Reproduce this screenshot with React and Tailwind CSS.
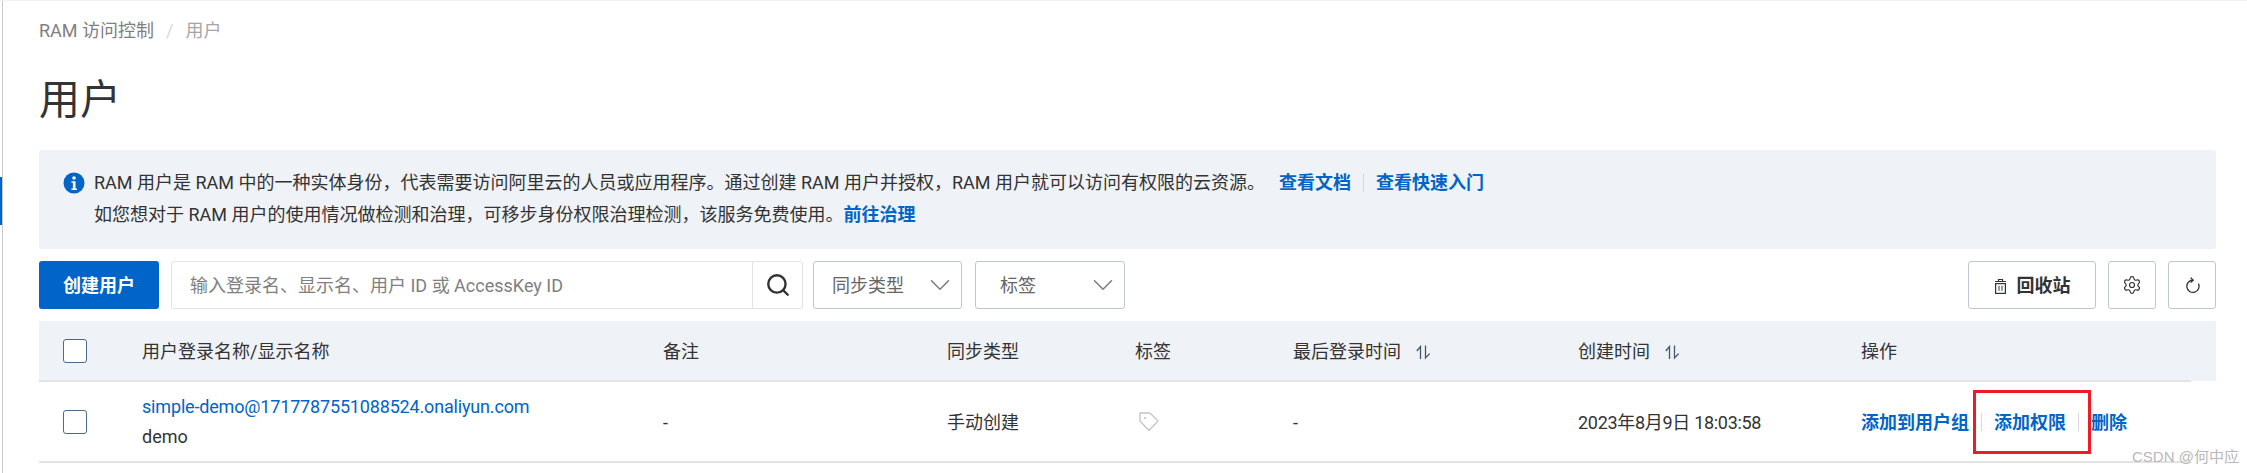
import React from 'react';
import { ChevronDown, Search, Settings } from 'lucide-react';

const SortIcon = () => (
    <svg width="15" height="16" viewBox="0 0 15 16" fill="none" stroke="currentColor" strokeWidth="1.3" className="text-[#44566c] ml-[15px] mt-[4px]">
        <path d="M4.5 14V1.5L0.8 6" />
        <path d="M9.5 0.5V13l4.2-4.4" />
    </svg>
);

const TrashIcon = () => (
    <svg width="13" height="17" viewBox="0 0 13 17" fill="none" className="text-[#333]">
        <path d="M1 4.5h11M4.5 4.5V2.5h4v2" stroke="currentColor" strokeWidth="1.2" />
        <rect x="1.6" y="6.6" width="9.8" height="9.8" stroke="currentColor" strokeWidth="1.2" />
        <path d="M5 8.8v5M8 8.8v5" stroke="#4b6a85" strokeWidth="1.3" />
    </svg>
);

const RefreshIcon = () => (
    <svg width="15" height="17" viewBox="0 0 15 17" fill="none" stroke="#333" strokeWidth="1.3">
        <path d="M8 3.2a6.1 6.1 0 1 0 5.4 3.4" />
        <path d="M5.6 0.8L8.2 3.2 5.6 5.6" />
    </svg>
);

const TagIcon = () => (
    <svg width="20" height="20" viewBox="0 0 20 20" fill="none" stroke="#c4c4c4" strokeWidth="1.3" strokeLinejoin="round">
        <path d="M1 1h10l8 8-9 9.5L1 9z" />
        <circle cx="6" cy="6" r="1.1" fill="#c4c4c4" stroke="none" />
    </svg>
);

const FilterSelect = ({ label, className, textClass }) => (
    <div className={`h-12 flex items-center justify-between border border-[#c0c6cc] rounded-[3px] ${className}`}>
        <span className={`text-[18px] text-[#666] ${textClass}`}>{label}</span>
        <ChevronDown size={34} strokeWidth={1.15} className="text-[#808080] mr-[4px]" />
    </div>
);

const App = () => {
    return (
        <div className="relative w-[2247px] h-[473px] bg-white overflow-hidden flex border-t border-[#f0f0f0] font-['Roboto','Noto_Sans_CJK_SC',sans-serif] text-[18px] text-[#333]">
            {/* left rail */}
            <div className="w-[3px] h-full border-r border-[#c8c8c8] shrink-0 pt-[176px]">
                <div className="w-[2px] h-12 bg-[#0064c8]"></div>
            </div>

            <div className="w-[2213px] pl-[36px] flex flex-col">
                <div className="h-[59px] leading-6 flex items-center gap-[12px] text-[#808080]">
                    <span>RAM 访问控制</span>
                    <span className="text-[#d9d9d9]">/</span>
                    <span className="text-[#a6a6a6]">用户</span>
                </div>

                <h1 className="h-[90px] flex items-center text-[41px] font-normal text-[#333] pb-[8px]">用户</h1>

                {/* info banner */}
                <div className="h-[99px] bg-[#eff2f7] rounded-[3px] pl-6 flex gap-[9px] pt-[17px]">
                    <svg width="22" height="22" viewBox="0 0 22 22" className="shrink-0 mt-[5px]">
                        <circle cx="11" cy="11" r="10.5" fill="#0064c8" />
                        <circle cx="11" cy="6" r="1.8" fill="#fff" />
                        <path d="M8.5 9.2h4v7.2h1.4v1.6H8.5v-1.6h1.4v-5.6H8.5z" fill="#fff" />
                    </svg>
                    <div className="leading-[32px]">
                        <div className="flex items-center">
                            <span>RAM 用户是 RAM 中的一种实体身份，代表需要访问阿里云的人员或应用程序。通过创建 RAM 用户并授权，RAM 用户就可以访问有权限的云资源。</span>
                            <a className="ml-[14px] font-bold text-[#0064c8]">查看文档</a>
                            <span className="w-px h-[18px] bg-[#d5d9de] mx-[12px]"></span>
                            <a className="font-bold text-[#0064c8]">查看快速入门</a>
                        </div>
                        <div>
                            <span>如您想对于 RAM 用户的使用情况做检测和治理，可移步身份权限治理检测，该服务免费使用。</span>
                            <a className="font-bold text-[#0064c8]">前往治理</a>
                        </div>
                    </div>
                </div>

                {/* toolbar */}
                <div className="flex items-center mt-3 h-12">
                    <button className="w-[120px] h-12 rounded-[3px] bg-[#0064c8] text-white font-bold">创建用户</button>
                    <div className="ml-3 w-[632px] h-12 flex items-center border border-[#e3e3e3] rounded-[3px]">
                        <span className="flex-1 pl-[18px] text-[#808080]">输入登录名、显示名、用户 ID 或 AccessKey ID</span>
                        <div className="w-[50px] h-full flex items-center justify-center border-l border-[#e3e3e3]">
                            <Search size={26} strokeWidth={2.2} className="text-[#333]" />
                        </div>
                    </div>
                    <FilterSelect label="同步类型" className="ml-[10px] w-[149px]" textClass="pl-[18px]" />
                    <FilterSelect label="标签" className="ml-[13px] w-[150px]" textClass="pl-[24px]" />
                    <div className="ml-auto flex items-center gap-3">
                        <button className="w-32 h-12 flex items-center justify-center gap-[10px] border border-[#c0c6cc] rounded-[3px] font-bold">
                            <TrashIcon />
                            回收站
                        </button>
                        <button className="w-12 h-12 flex items-center justify-center border border-[#c0c6cc] rounded-[3px]">
                            <Settings size={20} strokeWidth={1.4} />
                        </button>
                        <button className="w-12 h-12 flex items-center justify-center border border-[#c0c6cc] rounded-[3px]">
                            <RefreshIcon />
                        </button>
                    </div>
                </div>

                {/* table */}
                <div className="mt-3 h-[60px] bg-[#eff2f7] flex items-center">
                    <div className="w-[103px] pl-6 shrink-0">
                        <div className="w-6 h-6 bg-white border border-[#4d6a8a] rounded-[3px]"></div>
                    </div>
                    <div className="w-[521px] shrink-0">用户登录名称/显示名称</div>
                    <div className="w-[284px] shrink-0">备注</div>
                    <div className="w-[188px] shrink-0">同步类型</div>
                    <div className="w-[158px] shrink-0">标签</div>
                    <div className="w-[285px] shrink-0 flex items-center">最后登录时间<SortIcon /></div>
                    <div className="w-[283px] shrink-0 flex items-center">创建时间<SortIcon /></div>
                    <div>操作</div>
                </div>
                <div className="w-[2152px] border-t-[2px] border-b-[2px] border-[#e3e3e3] h-[83px] flex items-center -mt-[1px] pt-[1px]">
                    <div className="w-[103px] pl-6 shrink-0">
                        <div className="w-6 h-6 bg-white border border-[#4d6a8a] rounded-[3px]"></div>
                    </div>
                    <div className="w-[521px] shrink-0 leading-[30px]">
                        <div className="text-[#0064c8] tracking-[-0.17px]">simple-demo@1717787551088524.onaliyun.com</div>
                        <div>demo</div>
                    </div>
                    <div className="w-[284px] shrink-0">-</div>
                    <div className="w-[188px] shrink-0">手动创建</div>
                    <div className="w-[158px] shrink-0 pl-[4px]">
                        <TagIcon />
                    </div>
                    <div className="w-[285px] shrink-0">-</div>
                    <div className="w-[283px] shrink-0 tracking-[-0.3px]">2023年8月9日 18:03:58</div>
                    <div className="flex items-center font-bold text-[#0064c8] whitespace-nowrap">
                        <a>添加到用户组</a>
                        <span className="w-px h-[18px] bg-[#d5d9de] mx-[12px]"></span>
                        <a>添加权限</a>
                        <span className="w-px h-[18px] bg-[#d5d9de] mx-[12px]"></span>
                        <a>删除</a>
                    </div>
                </div>
            </div>

            {/* red annotation box */}
            <div className="absolute left-[1973px] top-[389px] w-[118px] h-[64px] border-[3px] border-[#ed1c24]"></div>
            {/* watermark */}
            <div className="absolute left-[2132px] top-[444px] text-[#b8b8b8] text-[15px] leading-[24px] font-['Liberation_Sans','Noto_Sans_CJK_SC',sans-serif]">CSDN @何中应</div>
        </div>
    );
};

export default App;
